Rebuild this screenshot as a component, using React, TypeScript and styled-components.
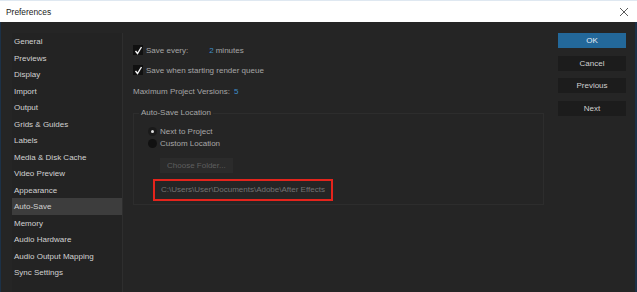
import styled, { createGlobalStyle } from 'styled-components';

const GlobalStyle = createGlobalStyle`
  html, body {
    margin: 0;
    padding: 0;
    background: #252525;
  }
  body {
    font-family: 'Liberation Sans', Arial, sans-serif;
    -webkit-font-smoothing: antialiased;
  }
`;

const Window = styled.div`
  width: 637px;
  height: 292px;
  display: flex;
  flex-direction: column;
  overflow: hidden;
`;

const TitleBar = styled.div`
  height: 22px;
  flex: none;
  background: #ffffff;
  display: flex;
  align-items: center;
  justify-content: space-between;
  padding: 0 8px 0 6px;
  box-sizing: border-box;
  border-top: 1px solid #dfe8f1;
`;

const Title = styled.span`
  font-size: 8.4px;
  color: #1b1b1b;
`;

const Body = styled.div`
  flex: 1;
  display: flex;
  background: #252525;
  border-left: 1px solid #1c3147;
  border-right: 2px solid #1c3147;
  padding: 11px 9px 0 11px;
  min-height: 0;
`;

const Sidebar = styled.ul`
  list-style: none;
  margin: 0;
  padding: 0;
  width: 111px;
  flex: none;
  box-sizing: border-box;
  border-right: 1px solid #2e2e2e;
  background: #232323;
`;

const SideItem = styled.li<{ $active?: boolean }>`
  height: 16.5px;
  line-height: 16.5px;
  padding: 1px 0 0 2px;
  box-sizing: border-box;
  font-size: 8px;
  color: #d2d2d2;
  background: ${(p) => (p.$active ? '#3d3d3d' : 'transparent')};
  white-space: nowrap;
`;

const Content = styled.div`
  width: 411px;
  flex: none;
  margin: 0 14px 0 10px;
  padding-top: 10px;
  display: flex;
  flex-direction: column;
`;

const Row = styled.div<{ $gap?: number }>`
  height: 14px;
  display: flex;
  align-items: center;
  margin-bottom: ${(p) => p.$gap ?? 0}px;
  font-size: 8px;
  color: #a6a6a6;
  white-space: nowrap;
`;

const CheckBox = styled.span`
  width: 10px;
  height: 10px;
  background: #101010;
  margin-right: 3px;
  display: flex;
  align-items: center;
  justify-content: center;
`;

const Value = styled.span<{ $left: number }>`
  color: #3f8fca;
  margin-left: ${(p) => p.$left}px;
  margin-right: 2px;
`;

const Group = styled.fieldset`
  margin: 0;
  padding: 5px 0 3px 0;
  border: 1px solid #2d2d2d;
  display: flex;
  flex-direction: column;
  align-items: flex-start;
`;

const Legend = styled.legend`
  margin-left: 5px;
  padding: 0 2px;
  height: 14px;
  line-height: 14px;
  font-size: 8px;
  color: #a8a8a8;
`;

const RadioRow = styled.div`
  height: 12px;
  display: flex;
  align-items: center;
  padding-left: 14px;
  font-size: 8px;
  color: #a8a8a8;
  white-space: nowrap;
`;

const Radio = styled.span<{ $on?: boolean }>`
  width: 9px;
  height: 9px;
  border-radius: 50%;
  background: ${(p) => (p.$on ? '#1a1a1a' : '#111111')};
  margin-right: 3px;
  display: flex;
  align-items: center;
  justify-content: center;
  &::after {
    content: '';
    width: 3px;
    height: 3px;
    border-radius: 50%;
    background: ${(p) => (p.$on ? '#e0e0e0' : 'transparent')};
  }
`;

const FolderButton = styled.div`
  margin: 9px 0 0 26px;
  width: 73px;
  height: 15px;
  line-height: 15px;
  background: #2b2b2b;
  color: #5f5f5f;
  font-size: 8px;
  padding-left: 7px;
  box-sizing: border-box;
  white-space: nowrap;
`;

const PathBox = styled.div`
  margin: 6px 0 0 19px;
  width: 180px;
  height: 22px;
  box-sizing: border-box;
  border: 2px solid #e4241c;
  padding-left: 6px;
  line-height: 18px;
  font-size: 8px;
  color: #727272;
  white-space: nowrap;
`;

const Buttons = styled.div`
  width: 68px;
  flex: none;
  display: flex;
  flex-direction: column;
  gap: 7.7px;
`;

const Button = styled.div<{ $primary?: boolean }>`
  height: 15px;
  line-height: 16px;
  text-align: center;
  font-size: 8px;
  color: ${(p) => (p.$primary ? '#e6eef5' : '#d0d0d0')};
  background: ${(p) => (p.$primary ? '#23689a' : '#1c1c1c')};
`;

const sections = [
  'General',
  'Previews',
  'Display',
  'Import',
  'Output',
  'Grids & Guides',
  'Labels',
  'Media & Disk Cache',
  'Video Preview',
  'Appearance',
  'Auto-Save',
  'Memory',
  'Audio Hardware',
  'Audio Output Mapping',
  'Sync Settings',
];

const Check = () => (
  <svg width="9" height="9" viewBox="0 0 9 9">
    <path d="M1.5 5 L3.5 7.5 L7.5 1" fill="none" stroke="#f2f2f2" strokeWidth="1.4" />
  </svg>
);

const Close = () => (
  <svg width="10" height="10" viewBox="0 0 10 10">
    <path d="M1 1 L9 9 M9 1 L1 9" stroke="#5a5a5a" strokeWidth="1" />
  </svg>
);

export default function App() {
  return (
    <>
      <GlobalStyle />
      <Window>
        <TitleBar>
          <Title>Preferences</Title>
          <Close />
        </TitleBar>
        <Body>
          <Sidebar>
            {sections.map((s) => (
              <SideItem key={s} $active={s === 'Auto-Save'}>
                {s}
              </SideItem>
            ))}
          </Sidebar>
          <Content>
            <Row $gap={6}>
              <CheckBox>
                <Check />
              </CheckBox>
              Save every:
              <Value $left={21}>2</Value> minutes
            </Row>
            <Row $gap={7}>
              <CheckBox>
                <Check />
              </CheckBox>
              Save when starting render queue
            </Row>
            <Row $gap={8}>
              Maximum Project Versions:
              <Value $left={4}>5</Value>
            </Row>
            <Group>
              <Legend>Auto-Save Location</Legend>
              <RadioRow>
                <Radio $on />
                Next to Project
              </RadioRow>
              <RadioRow>
                <Radio />
                Custom Location
              </RadioRow>
              <FolderButton>Choose Folder...</FolderButton>
              <PathBox>C:\Users\User\Documents\Adobe\After Effects</PathBox>
            </Group>
          </Content>
          <Buttons>
            <Button $primary>OK</Button>
            <Button>Cancel</Button>
            <Button>Previous</Button>
            <Button>Next</Button>
          </Buttons>
        </Body>
      </Window>
    </>
  );
}
